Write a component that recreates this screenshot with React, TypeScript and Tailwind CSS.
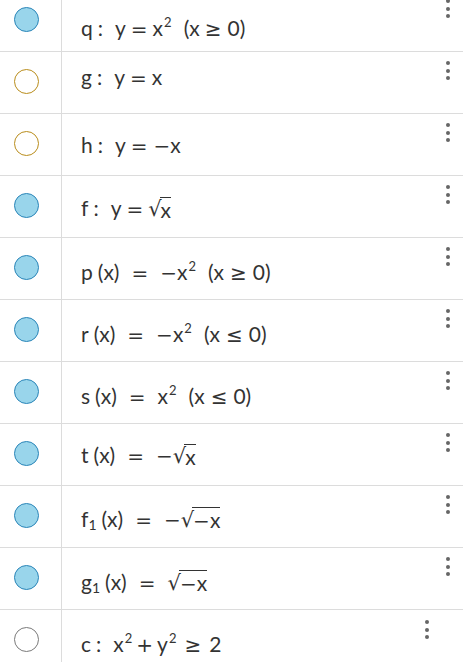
import type { ReactNode } from "react";

type Mark = "fill" | "gold" | "gray";

const gapClass: Record<number, string> = {
  2: "inline-block w-[2px]",
  3: "inline-block w-[3px]",
  4: "inline-block w-[4px]",
  5: "inline-block w-[5px]",
  6: "inline-block w-[6px]",
  8: "inline-block w-[8px]",
  10: "inline-block w-[10px]",
  12: "inline-block w-[12px]",
  14: "inline-block w-[14px]",
};

const S = ({ w = 4 }: { w?: number }) => <span className={gapClass[w]} />;

// operators come from DejaVu, letters from Lato
function Op({ children }: { children: ReactNode }) {
  return <span className="font-['DejaVu_Sans',sans-serif] text-[20px]">{children}</span>;
}

function Sup({ children }: { children: ReactNode }) {
  return <span className="relative -top-[9px] ml-[1px] text-[13px]">{children}</span>;
}

function Sub({ children }: { children: ReactNode }) {
  return <span className="relative top-[3px] text-[14px]">{children}</span>;
}

function Sqrt({ children }: { children: ReactNode }) {
  return (
    <span className="inline-flex items-end">
      <span className="mr-[-2px] font-['DejaVu_Sans',sans-serif] text-[21px] leading-[24px]">√</span>
      <span className="mb-[1px] border-t-[1.5px] border-[#333] pl-[1px] pt-[2px] leading-[20px]">{children}</span>
    </span>
  );
}

type Row = { mark: Mark; pt: string; dots?: string; body: ReactNode };

const rows: Row[] = [
  {
    mark: "fill",
    pt: "pt-[26px]",
    body: (
      <>
        q<S w={5} />:<S w={12} />y<S w={5} />
        <Op>=</Op>
        <S w={5} />x<Sup>2</Sup>
        <S w={12} />(x<S w={5} />
        <Op>≥</Op>
        <S w={6} />0)
      </>
    ),
  },
  {
    mark: "gold",
    pt: "pt-[13px]",
    body: (
      <>
        g<S w={5} />:<S w={12} />y<S w={5} />
        <Op>=</Op>
        <S w={5} />x
      </>
    ),
  },
  {
    mark: "gold",
    pt: "pt-[19px]",
    body: (
      <>
        h<S w={5} />:<S w={12} />y<S w={5} />
        <Op>=</Op>
        <S w={6} />
        <Op>−</Op>x
      </>
    ),
  },
  {
    mark: "fill",
    pt: "pt-[20px]",
    body: (
      <>
        f<S w={5} />:<S w={12} />y<S w={5} />
        <Op>=</Op>
        <S w={5} />
        <Sqrt>x</Sqrt>
      </>
    ),
  },
  {
    mark: "fill",
    pt: "pt-[22px]",
    body: (
      <>
        p<S w={5} />(x)<S w={12} />
        <Op>=</Op>
        <S w={12} />
        <Op>−</Op>x<Sup>2</Sup>
        <S w={12} />(x<S w={6} />
        <Op>≥</Op>
        <S w={6} />0)
      </>
    ),
  },
  {
    mark: "fill",
    pt: "pt-[22px]",
    body: (
      <>
        r<S w={5} />(x)<S w={12} />
        <Op>=</Op>
        <S w={12} />
        <Op>−</Op>x<Sup>2</Sup>
        <S w={12} />(x<S w={6} />
        <Op>≤</Op>
        <S w={6} />0)
      </>
    ),
  },
  {
    mark: "fill",
    pt: "pt-[22px]",
    body: (
      <>
        s<S w={5} />(x)<S w={12} />
        <Op>=</Op>
        <S w={12} />x<Sup>2</Sup>
        <S w={12} />(x<S w={6} />
        <Op>≤</Op>
        <S w={6} />0)
      </>
    ),
  },
  {
    mark: "fill",
    pt: "pt-[19px]",
    body: (
      <>
        t<S w={5} />(x)<S w={12} />
        <Op>=</Op>
        <S w={12} />
        <Op>−</Op>
        <Sqrt>x</Sqrt>
      </>
    ),
  },
  {
    mark: "fill",
    pt: "pt-[21px]",
    body: (
      <>
        f<Sub>1</Sub>
        <S w={5} />(x)<S w={12} />
        <Op>=</Op>
        <S w={12} />
        <Op>−</Op>
        <Sqrt>
          <Op>−</Op>x
        </Sqrt>
      </>
    ),
  },
  {
    mark: "fill",
    pt: "pt-[22px]",
    body: (
      <>
        g<Sub>1</Sub>
        <S w={5} />(x)<S w={12} />
        <Op>=</Op>
        <S w={12} />
        <Sqrt>
          <Op>−</Op>x
        </Sqrt>
      </>
    ),
  },
  {
    mark: "gray",
    pt: "pt-[22px]",
    dots: "mr-[34px] mt-[10px]",
    body: (
      <>
        c<S w={5} />:<S w={12} />x<Sup>2</Sup>
        <S w={4} />
        <Op>+</Op>
        <S w={4} />y<Sup>2</Sup>
        <S w={8} />
        <Op>≥</Op>
        <S w={8} />2
      </>
    ),
  },
];

const markClass: Record<Mark, string> = {
  fill: "bg-[#99d5eb] border-[#2a85b8]",
  gold: "bg-white border-[#b98d1c]",
  gray: "bg-white border-[#7a7a7a]",
};

function Dots({ className }: { className: string }) {
  return (
    <div className={`flex flex-col gap-[3.5px] ${className}`}>
      <span className="h-[4px] w-[4px] rounded-full bg-[#666]" />
      <span className="h-[4px] w-[4px] rounded-full bg-[#666]" />
      <span className="h-[4px] w-[4px] rounded-full bg-[#666]" />
    </div>
  );
}

export default function App() {
  return (
    <div className="h-[662px] w-[463px] overflow-hidden bg-white font-['Lato',sans-serif] text-[21px] text-[#333]">
      <div className="-mt-[10px] flex flex-col">
        {rows.map((r, i) => (
          <div key={i} className="flex h-[62px] shrink-0 border-b border-[#dcdcdc]">
            <div className="w-[62px] shrink-0 border-r border-[#dcdcdc] pl-[14px] pt-[17px]">
              <div className={`h-[25px] w-[25px] rounded-full border-[1.5px] ${markClass[r.mark]}`} />
            </div>
            <div className={`flex-1 whitespace-nowrap pl-[19px] leading-[24px] ${r.pt}`}>{r.body}</div>
            <Dots className={r.dots ?? "mr-[13px] mt-[9px]"} />
          </div>
        ))}
      </div>
    </div>
  );
}
